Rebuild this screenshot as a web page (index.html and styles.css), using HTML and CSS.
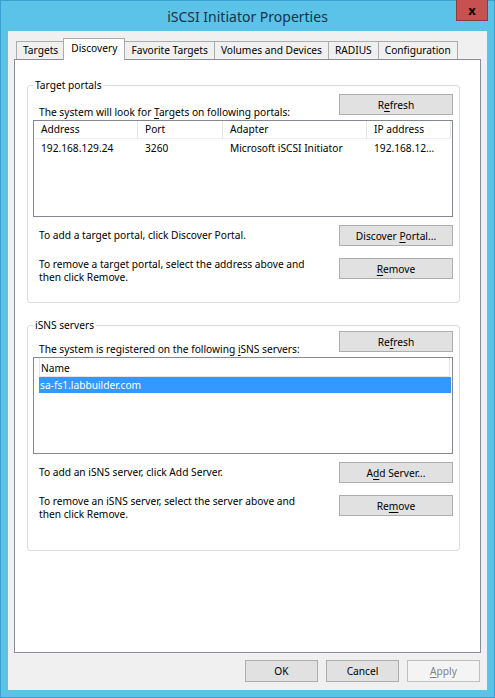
FILE: index.html
```html
<!DOCTYPE html>
<html lang="en">
<head>
  <meta charset="UTF-8" />
  <title>iSCSI Initiator Properties</title>
  <link rel="stylesheet" href="styles.css">
</head>
<body>
  <div class="window">
    <div class="titlebar">
      <span class="title">iSCSI Initiator Properties</span>
      <button class="close" type="button">x</button>
    </div>

    <div class="client">
      <div class="tabs">
        <div class="tab">Targets</div>
        <div class="tab active">Discovery</div>
        <div class="tab">Favorite Targets</div>
        <div class="tab">Volumes and Devices</div>
        <div class="tab">RADIUS</div>
        <div class="tab">Configuration</div>
      </div>

      <div class="panel">
        <fieldset class="group portals">
          <legend>Target portals</legend>
          <div class="row top">
            <span class="text">The system will look for <u>T</u>argets on following portals:</span>
            <button class="btn" type="button">R<u>e</u>fresh</button>
          </div>
          <div class="list">
            <div class="head">
              <span class="col c1">Address</span>
              <span class="col c2">Port</span>
              <span class="col c3">Adapter</span>
              <span class="col c4">IP address</span>
            </div>
            <div class="item">
              <span class="col c1">192.168.129.24</span>
              <span class="col c2">3260</span>
              <span class="col c3">Microsoft iSCSI Initiator</span>
              <span class="col c4">192.168.12...</span>
            </div>
          </div>
          <div class="row mid">
            <span class="text">To add a target portal, click Discover Portal.</span>
            <button class="btn" type="button">Discover <u>P</u>ortal...</button>
          </div>
          <div class="row low">
            <span class="text">To remove a target portal, select the address above and<br>then click Remove.</span>
            <button class="btn" type="button"><u>R</u>emove</button>
          </div>
        </fieldset>

        <fieldset class="group isns">
          <legend>iSNS servers</legend>
          <div class="row top">
            <span class="text">The system is registered on the following <u>i</u>SNS servers:</span>
            <button class="btn" type="button">Re<u>f</u>resh</button>
          </div>
          <div class="list boxed">
            <div class="head">
              <span class="col">Name</span>
            </div>
            <div class="item selected">
              <span class="col">sa-fs1.labbuilder.com</span>
            </div>
          </div>
          <div class="row mid">
            <span class="text">To add an iSNS server, click Add Server.</span>
            <button class="btn" type="button">A<u>d</u>d Server...</button>
          </div>
          <div class="row low">
            <span class="text">To remove an iSNS server, select the server above and<br>then click Remove.</span>
            <button class="btn" type="button">Re<u>m</u>ove</button>
          </div>
        </fieldset>
      </div>

      <div class="actions">
        <button class="btn small" type="button">OK</button>
        <button class="btn small" type="button">Cancel</button>
        <button class="btn small" type="button" disabled><u>A</u>pply</button>
      </div>
    </div>
  </div>
</body>
</html>
```

FILE: styles.css
```css
body {
  margin: 0;
  font-family: 'Segoe UI', 'Noto Sans', 'Open Sans', sans-serif;
  font-size: 10.2px;
  color: #000;
  background: #5bc3e8;
}
u {
  text-decoration-thickness: 1px;
  text-underline-offset: 2px;
}
.window {
  width: 495px;
  height: 698px;
  box-sizing: border-box;
  border: 1px solid #3a9fcc;
  background: #5bc3e8;
  display: flex;
  flex-direction: column;
}
.titlebar {
  position: relative;
  height: 30px;
  display: flex;
  align-items: center;
  justify-content: center;
}
.title {
  font-size: 14px;
  color: #16334a;
  margin-top: 1px;
}
.close {
  position: absolute;
  top: -1px;
  right: 6px;
  width: 32px;
  height: 21px;
  padding: 0;
  background: #c75050;
  border: 1px solid #8c3b3b;
  border-top: none;
  color: #000;
  font: bold 13px 'Noto Sans', sans-serif;
  line-height: 16px;
}
.client {
  flex: 1;
  margin: 0 7px 7px 7px;
  padding: 7px 6px 0 6px;
  background: #f0f0f0;
  display: flex;
  flex-direction: column;
}
.tabs {
  display: flex;
  align-items: flex-end;
  padding-left: 2px;
  margin-bottom: -1px;
}
.tab {
  height: 17px;
  line-height: 17px;
  padding: 0 6px;
  margin-bottom: 1px;
  background: #f0f0f0;
  border: 1px solid #acacac;
  border-bottom: none;
  margin-right: -1px;
}
.tab.active {
  position: relative;
  z-index: 1;
  height: 21px;
  line-height: 18px;
  margin: 0 -1px 0 -1px;
  padding: 0 7px;
  background: #fff;
}
.panel {
  flex: 1;
  background: #fff;
  border: 1px solid #898c95;
  padding: 17px 20px 0 12px;
}
.group {
  box-sizing: border-box;
  margin: 0;
  padding: 1px 6px 0 5px;
  border: 1px solid #dcdcdc;
  border-radius: 3px;
}
.group legend {
  padding: 0 2px;
  line-height: 16px;
}
.portals {
  height: 226px;
}
.isns {
  margin-top: 14px;
  height: 234px;
}
.isns .row.top {
  margin-top: -3px;
}
.row {
  display: flex;
  justify-content: space-between;
}
.row .text {
  padding-left: 6px;
  line-height: 13px;
}
.row.top {
  align-items: flex-end;
}
.row.top .text {
  line-height: 15px;
}
.row.top .btn {
  margin-bottom: 5px;
}
.row.mid {
  margin-top: 8px;
  align-items: center;
}
.row.low {
  margin-top: 12px;
  align-items: flex-start;
}
.btn {
  width: 114px;
  height: 21px;
  padding: 0;
  background: #e1e1e1;
  border: 1px solid #adadad;
  font: inherit;
  color: #000;
}
.btn.small {
  width: 73px;
  height: 22px;
}
.btn:disabled {
  background: #f4f4f4;
  border-color: #bfbfbf;
  color: #838383;
}
.list {
  height: 95px;
  border: 1px solid #828790;
  background: #fff;
}
.head {
  display: flex;
  height: 17px;
  line-height: 17px;
  margin-right: 1px;
  border-bottom: 1px solid #f0f0f0;
}
.head .col {
  border-right: 1px solid #e5e5e5;
}
.item {
  display: flex;
  height: 18px;
  line-height: 18px;
}
.col {
  padding-left: 7px;
  box-sizing: border-box;
}
.c1 { width: 104px; }
.c2 { width: 85px; }
.c3 { width: 144px; }
.c4 { width: 84px; }
.boxed {
  box-sizing: border-box;
  height: 97px;
  padding: 0 1px 0 5px;
}
.boxed .head {
  height: 18px;
  line-height: 20px;
  border: 1px solid #e5e5e5;
  border-top: none;
}
.boxed .head .col {
  flex: 1;
  border: none;
  padding-left: 1px;
}
.boxed .item .col {
  padding-left: 1px;
}
.item.selected {
  background: #3399ff;
  color: #fff;
  height: 16px;
  line-height: 16px;
}
.actions {
  display: flex;
  justify-content: flex-end;
  gap: 8px;
  padding: 7px 1px 8px 0;
}
```
